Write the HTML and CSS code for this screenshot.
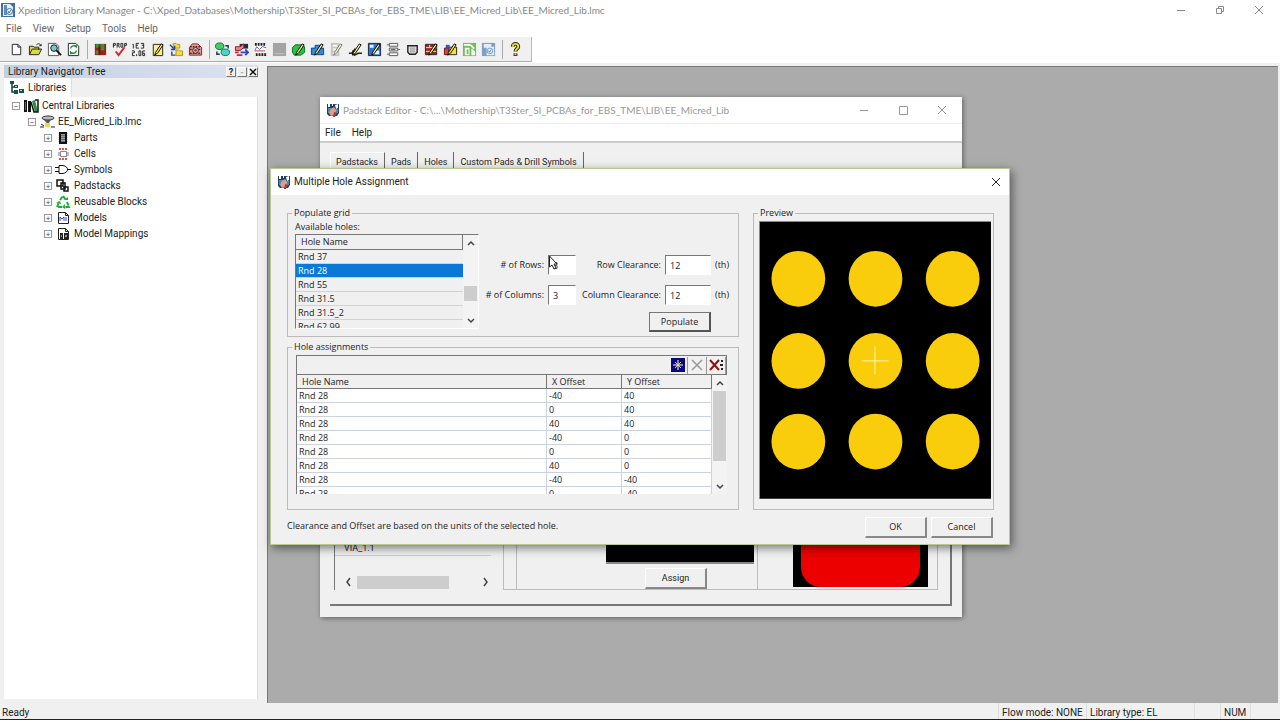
FILE: index.html
```html
<!DOCTYPE html>
<html lang="en">
<head>
<meta charset="utf-8">
<title>Xpedition Library Manager</title>
<link rel="stylesheet" href="styles.css">
</head>
<body>
<svg class="defs" aria-hidden="true">
  <symbol id="padicon" viewBox="0 0 14 14"><path fill="#24405f" d="M1 1h12v9l-2 3H3L1 11z"/><path fill="#fff" d="M2 1h2v3H2zM6 1h1v2H6zM9 2l3-1v4l-2 1z"/><path fill="#4d86c0" d="M2 5h4v5H2zM9 6h3v4H9z"/><path fill="#d9a08a" d="M5 6l3-2 2 3-1 5-4 1-2-3z"/><path fill="#a73b3b" d="M8 9l3 1-2 4H7z"/></symbol>
  <symbol id="pencil" viewBox="0 0 16 16"><path fill="#fff27a" stroke="#000" d="M6 11L12 2l2 1-6 9-3 2z"/></symbol>
  <symbol id="up" viewBox="0 0 8 8"><path fill="none" stroke="#444" stroke-width="1.500" d="M1 6l3-3 3 3"/></symbol>
  <symbol id="down" viewBox="0 0 8 8"><path fill="none" stroke="#444" stroke-width="1.500" d="M1 2l3 3 3-3"/></symbol>
  <symbol id="close" viewBox="0 0 10 10"><path fill="none" stroke="currentColor" d="M1 1l8 8M9 1l-8 8"/></symbol>
</svg>
<div class="app">
  <header class="titlebar">
    <svg class="i14" viewBox="0 0 14 14"><path fill="#3f6fa5" d="M0 0h14v14H0z"/><path fill="#e8f1fa" d="M2 1h7l3 3v9H2z"/><path fill="#5f8dc0" d="M3 2h3v10H3z"/><circle cx="8.500" cy="8.500" r="3" fill="#fff" stroke="#3b6ba6"/><path stroke="#3b6ba6" fill="none" d="M7 8l1 2 2-3"/></svg>
    <h1>Xpedition Library Manager - C:\Xped_Databases\Mothership\T3Ster_SI_PCBAs_for_EBS_TME\LIB\EE_Micred_Lib\EE_Micred_Lib.lmc</h1>
    <div class="winbtns main-btns">
      <button aria-label="Minimize"><svg class="i10" viewBox="0 0 10 10"><path stroke="currentColor" d="M1 5.500h8"/></svg></button>
      <button aria-label="Restore"><svg class="i10" viewBox="0 0 10 10"><path fill="none" stroke="currentColor" d="M1.500 3.500h5v5h-5zM3.500 3V1.500h5v5H7"/></svg></button>
      <button aria-label="Close"><svg class="i10"><use href="#close"/></svg></button>
    </div>
  </header>
  <nav class="menubar"><button>File</button><button>View</button><button>Setup</button><button>Tools</button><button>Help</button></nav>
  <div class="toolrow"><div class="toolbar" role="toolbar">
    <button aria-label="New"><svg viewBox="0 0 16 16"><path fill="#fff" stroke="#222" d="M3.500 2.500h6l3 3v8h-9zM9.500 2.500v3h3"/></svg></button>
    <button aria-label="Open"><svg viewBox="0 0 16 16"><path fill="#d8d84a" stroke="#222" d="M1.500 13.500v-9h4l1 1h5v3M1.500 13.500l3-6h10l-3 6z"/><path fill="none" stroke="#222" d="M9 3c2-2 4-1 5 1m0-2v2h-2"/></svg></button>
    <button aria-label="Find"><svg viewBox="0 0 16 16"><path fill="#fff" stroke="#555" d="M1.500 1.500h8l3 3v10h-11z"/><circle cx="7.500" cy="6.500" r="3.500" fill="#7fc6c9" stroke="#111"/><path stroke="#111" stroke-width="2" d="M10 9l5 5"/></svg></button>
    <button aria-label="Refresh"><svg viewBox="0 0 16 16"><path fill="#fff" stroke="#222" d="M2.500 1.500h8l3 3v10h-11z"/><path fill="none" stroke="#13903a" stroke-width="1.500" d="M5 7c0-3 4-4 6-2V3m0 6c0 3-4 4-6 2v2"/></svg></button>
    <span class="sep"></span>
    <button aria-label="Partition"><svg viewBox="0 0 16 16"><path fill="#a51d16" d="M2 2h12v12H2z"/><path fill="#2c9a35" d="M3 2h3v4H3zM8 2h4v7H8zM3 9h3v4H3z"/><path fill="#6e1410" d="M6 5h2v9H6z"/></svg></button>
    <button aria-label="Properties"><svg viewBox="0 0 16 16"><path fill="none" stroke="#222" d="M1.500 6V1.500h2v2h-2M5.500 6V1.500h2v2h-2M7 4l1 2M9.500 1.500h2v4h-2zM13.500 6V1.500h2v2h-2"/><path fill="none" stroke="#e0262d" stroke-width="2" d="M4 10l3 4 6-8"/></svg></button>
    <button aria-label="Units"><svg viewBox="0 0 16 16"><path fill="none" stroke="#222" d="M1.500 2.500h1v4.500M8.500 1.500h-3v5h3m-3-3h2M10.500 1.500h3v5h-3m1-3h2M1 9.500h2.500v2h-2v3H4M6 13v2M8.500 9.500h2v5h-2zM15 9.500h-2.500v5h2v-2.500h-2"/></svg></button>
    <button aria-label="Edit"><svg viewBox="0 0 16 16"><path fill="#f4f08d" stroke="#222" d="M3.500 2.500h10v12h-10z"/><use href="#pencil"/></svg></button>
    <button aria-label="Folders"><svg viewBox="0 0 16 16"><path fill="#f6dc37" stroke="#b8901c" d="M4.500 1.500h3l1 1h3v4h-7zM7.500 8.500h3l1 1h3v5h-7z"/><path stroke="#27459d" stroke-width="1.500" fill="none" d="M1 3l4 4m-3 1h4V4M3 10v4h4"/></svg></button>
    <button aria-label="Repair"><svg viewBox="0 0 16 16"><path fill="#d8a49c" stroke="#8c2018" d="M1.500 6l3-4h6l4 4v8h-13z"/><path fill="none" stroke="#7a1c14" stroke-width="1.500" stroke-dasharray="2 1" d="M2 5h12M2 8h12M2 12h12"/><circle cx="8" cy="9" r="3" fill="#ddd" stroke="#222"/><circle cx="8" cy="9" r="1.500" fill="#c22"/></svg></button>
    <span class="sep"></span>
    <button aria-label="Transfer"><svg viewBox="0 0 16 16"><ellipse cx="5" cy="4.500" rx="4.500" ry="3.500" fill="#3ed166" stroke="#176a35"/><ellipse cx="11" cy="11" rx="4.500" ry="3.500" fill="#45d9cb" stroke="#176a6a"/><path stroke="#136" fill="none" stroke-width="1.500" d="M11 4h3v3M5 13H2v-3"/></svg></button>
    <button aria-label="Part editor"><svg viewBox="0 0 16 16"><path fill="#222a44" d="M6 2h9v5H6z"/><path fill="#e78a80" stroke="#8c1c28" d="M1.500 5h5l4-3v4l-4 3h-5z"/><path fill="none" stroke="#2e47c4" stroke-width="2" d="M7 11h8m-3-3l3 3-3 3"/><path stroke="#d3263b" stroke-width="2" d="M1 11h4M3 14h6"/></svg></button>
    <button aria-label="Signal"><svg viewBox="0 0 16 16"><path fill="#fff" d="M2 2h12v10H2z"/><path fill="none" stroke="#222" stroke-dasharray="2 1" stroke-width="3" d="M2 2.500h12M3 13.500h12"/><path fill="none" stroke="#5a58b9" d="M2 9l2-4 3 3 3-3 4 1"/><path stroke="#c33" d="M2 9.500h11"/></svg></button>
    <button aria-label="Disabled view"><svg viewBox="0 0 16 16"><path fill="#a4a4a4" d="M1 1h14v14H1z"/><path stroke="#c6c6c6" d="M3 12.500h10"/></svg></button>
    <button aria-label="Edit layout"><svg viewBox="0 0 16 16"><path fill="#27c445" stroke="#0a6c21" d="M1.500 6l3-3h7l3 2v6l-4 3h-7l-2-3z"/><use href="#pencil"/></svg></button>
    <button aria-label="Edit block"><svg viewBox="0 0 16 16"><path fill="#2d8ce0" stroke="#123f91" d="M1.500 6.500h4v-3h6v3h3v7h-13z"/><use href="#pencil"/></svg></button>
    <button aria-label="Edit column"><svg viewBox="0 0 16 16" opacity=".5"><path fill="#999" d="M2 1h9v14H2z"/><path stroke="#fff" stroke-width="2" d="M4 4h5M4 8h5M4 12h5"/><use href="#pencil"/></svg></button>
    <button aria-label="Edit symbol"><svg viewBox="0 0 16 16"><path fill="none" stroke="#222" stroke-width="1.500" d="M1 12h3l3-4v6l4-2h4M5 9v5"/><use href="#pencil"/></svg></button>
    <button aria-label="Edit padstack"><svg viewBox="0 0 16 16"><path fill="#2678d0" stroke="#17213e" d="M1.500 1.500h13v13h-13z"/><path fill="#eee" d="M3 3h4v3H3zM8 9h5v4H8z"/><use href="#pencil"/></svg></button>
    <button aria-label="Cells"><svg viewBox="0 0 16 16"><path fill="#fff" stroke="#555" d="M3.500 1.500h9v3h-9zM3.500 6.500h9v3h-9zM3.500 11.500h9v3h-9z"/><path stroke="#555" d="M1 3h2M13 8h2M1 13h2M5 8h5"/></svg></button>
    <button aria-label="Shield"><svg viewBox="0 0 16 16"><path fill="#e8e8e8" stroke="#222" stroke-width="1.500" d="M3 4h10v7l-2 2H5l-2-2z"/><path stroke="#888" d="M5 6.500h6M5 8.500h6M5 10.500h6"/></svg></button>
    <button aria-label="Edit bricks"><svg viewBox="0 0 16 16"><path fill="#9f2921" stroke="#222" d="M1.500 2.500h12v11h-12z"/><path stroke="#eee" d="M2 6h11M2 10h11M6 3v3M9 6v4"/><use href="#pencil"/></svg></button>
    <button aria-label="Edit package"><svg viewBox="0 0 16 16"><path fill="#e23b32" stroke="#611" d="M1.500 6.500h5v7h-5z"/><path fill="#f5df32" stroke="#222" d="M6.500 5.500h8v8h-8z"/><path fill="#2c57b8" d="M3 3h4v4H3z"/><use href="#pencil"/></svg></button>
    <button aria-label="Export"><svg viewBox="0 0 16 16"><path fill="#6cbf55" d="M1 1h14v14H1z"/><path fill="#fff" d="M2 2h7v2H2zM3 6h5v8H3zM10 7l4 3v4h-4z"/><path fill="#6cbf55" d="M5 8h2v5H5z"/><path stroke="#fff" stroke-width="2" d="M9 3l4 4"/></svg></button>
    <button aria-label="Library"><svg viewBox="0 0 16 16"><path fill="#7b9fca" d="M1 1h14v14H1z"/><path fill="#e5eef8" d="M3 2h8v3h3v9H6V6H3z"/><circle cx="9.500" cy="9.500" r="3" fill="#fff" stroke="#6b94c4"/><path fill="none" stroke="#4c7cb5" d="M8 9l1 2 2-3"/></svg></button>
    <span class="sep"></span>
    <button aria-label="Help"><svg viewBox="0 0 16 16"><path fill="none" stroke="#222" stroke-width="4" d="M5 5c0-4 6-4 6 0 0 2-3 2-3 5m0 2v3"/><path fill="none" stroke="#e9dc2e" stroke-width="2" d="M5 5c0-4 6-4 6 0 0 2-3 2-3 5m0 2v2"/></svg></button>
  </div></div>
  <main class="workspace">
    <aside class="navigator">
      <div class="caption"><h2>Library Navigator Tree</h2><button aria-label="Help">?</button><button aria-label="Menu" class="dim">-</button><button aria-label="Close"><svg class="i8" viewBox="0 0 8 8"><path stroke="#111" stroke-width="1.500" d="M1 1l6 6M7 1L1 7"/></svg></button></div>
      <div class="navtabs"><button class="navtab"><svg class="i14" viewBox="0 0 14 14"><path fill="none" stroke="#123f37" stroke-width="1.500" d="M2 1v10h3M2 6h3"/><path fill="#155548" d="M0 0h4v3H0zM4 4h4v3H4zM4 9h4v4H4zM9 8h5v4H9z"/><path fill="#9dd" d="M5 5h2v1H5zM10 9h2v1h-2z"/></svg>Libraries</button></div>
      <ul class="tree">
        <li class="l0"><i class="box">−</i><svg viewBox="0 0 16 14"><path fill="#111" d="M1 1h3v12H1zM5 2h3v11H5z"/><path fill="#2e8b46" d="M2 3h1v8H2zM9 2l3-1 3 12h-3z"/><path fill="none" stroke="#111" stroke-width="1.500" d="M8 3l3 10h4V1h-3"/></svg>Central Libraries</li>
        <li class="l1"><i class="box">−</i><svg viewBox="0 0 16 14"><ellipse cx="9" cy="3" rx="6" ry="2" fill="#bbb" stroke="#333"/><path fill="#555" d="M5 5h7L9 9z"/><path fill="#ecdf31" d="M6 8h5v4H6z"/><path stroke="#222" d="M1 12h4m7 0h4M2 9l3 2"/></svg>EE_Micred_Lib.lmc</li>
        <li class="l2"><i class="box">+</i><svg viewBox="0 0 16 14"><path fill="#999" stroke="#111" stroke-width="2" d="M5 2h6v10H5z"/><path stroke="#111" stroke-dasharray="1 1" stroke-width="9" d="M8 2v10" opacity=".3"/></svg>Parts</li>
        <li class="l2"><i class="box">+</i><svg viewBox="0 0 16 14"><path fill="#fff" stroke="#888" d="M5.500 4.500h6v5h-6z"/><path stroke="#e05050" stroke-width="2" stroke-dasharray="2 1" d="M4 2h8M4 12h8"/><path stroke="#777" d="M3 6h2M3 8h2M12 6h2M12 8h2"/></svg>Cells</li>
        <li class="l2"><i class="box">+</i><svg viewBox="0 0 16 14"><path fill="#fff" stroke="#111" d="M4 2.500h4c6 1 6 7 0 8H4zM0 4.500h4M0 8.500h4M12 6.500h4"/></svg>Symbols</li>
        <li class="l2"><i class="box">+</i><svg viewBox="0 0 16 14"><path fill="#fff" stroke="#111" stroke-width="1.500" d="M2 1h6v6H2zM6 4h4v6H6zM9 8h4v4H9z"/></svg>Padstacks</li>
        <li class="l2"><i class="box">+</i><svg viewBox="0 0 16 14"><path fill="none" stroke="#1cae36" stroke-width="2" stroke-dasharray="4 1" d="M5 5l3-4 3 4M12 7l2 5H9M7 12H2l2-5"/><path fill="#1cae36" d="M9 5h4V2zM10 9v5l-3-2zM1 8l4-2 1 3z"/></svg>Reusable Blocks</li>
        <li class="l2"><i class="box">+</i><svg viewBox="0 0 16 14"><path fill="#fff" stroke="#222" d="M3.500 1.500h7l3 3v8h-10zM10.500 1.500v3h3"/><path fill="none" stroke="#3f46d0" d="M5 10V6l2 2 2-2v4m2-4v4"/></svg>Models</li>
        <li class="l2"><i class="box">+</i><svg viewBox="0 0 16 14"><path fill="#fff" stroke="#222" d="M3.500 1.500h7l3 3v8h-10zM10.500 1.500v3h3"/><path fill="#222" d="M5 6h3v7H5zM9 6h4v7H9z"/><path stroke="#fff" d="M6 9h1m3 0h2"/></svg>Model Mappings</li>
      </ul>
    </aside>
    <div class="desktop"></div>
  </main>
  <footer class="status"><span class="grow">Ready</span><span class="s1">Flow mode: NONE</span><span class="s2">Library type: EL</span><span class="s3"></span><span class="s4">NUM</span><span class="s4"></span></footer>

  <section class="window editor">
    <header class="wtitle pale"><svg class="i14"><use href="#padicon"/></svg><h2>Padstack Editor - C:\...\Mothership\T3Ster_SI_PCBAs_for_EBS_TME\LIB\EE_Micred_Lib</h2>
      <div class="winbtns"><button aria-label="Minimize"><svg class="i10" viewBox="0 0 10 10"><path stroke="currentColor" d="M1 5.500h8"/></svg></button><button aria-label="Maximize"><svg class="i10" viewBox="0 0 10 10"><path fill="none" stroke="currentColor" d="M1.500 1.500h8v8h-8z"/></svg></button><button aria-label="Close"><svg class="i10"><use href="#close"/></svg></button></div></header>
    <nav class="wmenu"><button>File</button><button>Help</button></nav>
    <div class="editor-body">
      <div class="tabs"><button class="active">Padstacks</button><button>Pads</button><button>Holes</button><button>Custom Pads &amp; Drill Symbols</button></div>
      <div class="panel">
        <div class="padlist"><div class="padname">VIA_1.1</div><div class="hscroll"><svg class="i10" viewBox="0 0 10 10"><path fill="none" stroke="#444" stroke-width="1.500" d="M6 1L3 5l3 4"/></svg><span class="hthumb"></span><svg class="i10" viewBox="0 0 10 10"><path fill="none" stroke="#444" stroke-width="1.500" d="M4 1l3 4-3 4"/></svg></div></div>
        <div class="padprops"><div class="gutter"></div><div class="assign"><div class="view"></div><button class="btn">Assign</button></div><div class="padview"><div class="redpad"></div></div></div>
      </div>
    </div>
  </section>

  <section class="window dialog" role="dialog" aria-labelledby="dlg">
    <header class="wtitle"><svg class="i14"><use href="#padicon"/></svg><h2 id="dlg">Multiple Hole Assignment</h2><div class="winbtns"><button aria-label="Close"><svg class="i10"><use href="#close"/></svg></button></div></header>
    <div class="dialog-body">
      <div class="groups">
        <div class="left">
          <fieldset class="populate"><legend>Populate grid</legend>
            <div class="available"><div class="avlabel">Available holes:</div>
              <div class="listbox"><table class="holes"><thead><tr><th>Hole Name</th></tr></thead><tbody><tr><td>Rnd 37</td></tr><tr class="selected"><td>Rnd 28</td></tr><tr><td>Rnd 55</td></tr><tr><td>Rnd 31.5</td></tr><tr><td>Rnd 31.5_2</td></tr><tr><td>Rnd 62.99</td></tr></tbody></table>
                <div class="vscroll"><svg class="i8"><use href="#up"/></svg><span class="thumb low"></span><svg class="i8"><use href="#down"/></svg></div></div>
            </div>
            <form class="gridform">
              <label for="rows"># of Rows:</label><input id="rows" value="3"><label for="rc">Row Clearance:</label><input id="rc" value="12"><span>(th)</span>
              <label for="cols"># of Columns:</label><input id="cols" value="3"><label for="cc">Column Clearance:</label><input id="cc" value="12"><span>(th)</span>
              <button type="button" class="btn default">Populate</button>
            </form>
          </fieldset>
          <fieldset class="assignments"><legend>Hole assignments</legend>
            <div class="atools"><button aria-label="Add row" class="add"><svg viewBox="0 0 14 14"><path fill="#09097b" d="M0 0h14v14H0z"/><path stroke="#fff" d="M7 2v10M2 7h10"/><path stroke="#f3e56a" d="M4 4l6 6M10 4l-6 6"/></svg></button><button aria-label="Delete row"><svg viewBox="0 0 14 14"><path stroke="#999" stroke-width="1.500" d="M2 2l10 10M12 2L2 12"/></svg></button><button aria-label="Delete all rows"><svg viewBox="0 0 14 14"><path stroke="#8f1111" stroke-width="2" d="M1 2l9 10M10 2L1 12"/><path fill="#222" d="M12 2h2v2h-2zM11 6h3v2h-3zM12 10h2v2h-2z"/></svg></button></div>
            <div class="atable"><table><thead><tr><th>Hole Name</th><th class="cx">X Offset</th><th class="cy">Y Offset</th></tr></thead><tbody>
              <tr><td>Rnd 28</td><td>-40</td><td>40</td></tr><tr><td>Rnd 28</td><td>0</td><td>40</td></tr><tr><td>Rnd 28</td><td>40</td><td>40</td></tr><tr><td>Rnd 28</td><td>-40</td><td>0</td></tr><tr><td>Rnd 28</td><td>0</td><td>0</td></tr><tr><td>Rnd 28</td><td>40</td><td>0</td></tr><tr><td>Rnd 28</td><td>-40</td><td>-40</td></tr><tr><td>Rnd 28</td><td>0</td><td>-40</td></tr></tbody></table>
              <div class="vscroll"><svg class="i8"><use href="#up"/></svg><span class="thumb tall"></span><svg class="i8"><use href="#down"/></svg></div></div>
          </fieldset>
        </div>
        <fieldset class="preview"><legend>Preview</legend>
          <svg viewBox="0 0 232 278"><path d="M0 0h232v278H0z"/><g fill="#f9cc0c"><ellipse cx="38.500" cy="57" rx="27" ry="28"/><ellipse cx="116" cy="57" rx="27" ry="28"/><ellipse cx="193.500" cy="57" rx="27" ry="28"/><ellipse cx="38.500" cy="139.500" rx="27" ry="28"/><ellipse cx="116" cy="139.500" rx="27" ry="28"/><ellipse cx="193.500" cy="139.500" rx="27" ry="28"/><ellipse cx="38.500" cy="220.500" rx="27" ry="28"/><ellipse cx="116" cy="220.500" rx="27" ry="28"/><ellipse cx="193.500" cy="220.500" rx="27" ry="28"/></g><path stroke="#fff7b0" d="M102 139.500h27M115.500 125v28"/></svg>
        </fieldset>
      </div>
      <div class="foot"><p>Clearance and Offset are based on the units of the selected hole.</p><button class="btn">OK</button><button class="btn">Cancel</button></div>
    </div>
  </section>
  <svg class="cursor" viewBox="0 0 10 16"><path fill="#fff" stroke="#222" d="M.500 1v11l2.500-2 2 4 2-1-2-4h3z"/></svg>
</div>
</body>
</html>
```
FILE: styles.css
```css
* { box-sizing: border-box; }
body { margin: 0; background: #f0f0f0; color: #222; font: 10px/14px Roboto, "Open Sans", sans-serif; }
h1, h2, p, ul { margin: 0; padding: 0; font-size: inherit; font-weight: 400; }
button { border: 0; padding: 0; background: none; color: inherit; font: inherit; }
svg { display: block; flex: none; }
table { border-collapse: separate; border-spacing: 0; table-layout: fixed; }
.defs { position: absolute; width: 0; height: 0; }
.i14 { width: 14px; height: 14px; }
.i10 { width: 10px; height: 10px; }
.i8 { width: 8px; height: 8px; }

.app { position: relative; display: flex; flex-direction: column; height: 100vh; overflow: hidden; border-bottom: 1px solid #222; }
.titlebar { display: flex; align-items: center; gap: 3px; height: 20px; padding-left: 1px; background: #fff; color: #888; }
.titlebar h1 { flex: 1; white-space: nowrap; }
.titlebar h1, .pale h2 { font-family: Lato, "Open Sans", sans-serif; }
.winbtns { display: flex; gap: 29px; margin-left: auto; }
.main-btns { padding-right: 16px; }
.menubar { display: flex; gap: 11px; height: 17px; padding-left: 6px; background: #fff; color: #666; }
.toolrow { height: 26px; background: #fff; }
.toolbar { display: flex; align-items: center; width: 532px; height: 25px; padding-left: 7px; background: #f0f0f0; border-right: 1px solid #bbb; border-bottom: 1px solid #aaa; }
.toolbar button { width: 19px; }
.toolbar svg { width: 15px; height: 15px; margin: auto; }
.sep { width: 8px; height: 19px; background: linear-gradient(#aaa, #aaa) center / 1px 100% no-repeat; }

.workspace { flex: 1; display: flex; min-height: 0; }
.navigator { display: flex; flex-direction: column; width: 258px; margin-right: 9px; padding: 2px 0 4px 4px; }
.caption { display: flex; align-items: center; gap: 1px; height: 13px; padding-left: 4px; background: linear-gradient(90deg, #c3d0e2, #dbe3ee); }
.caption h2 { flex: 1; }
.caption button { display: flex; align-items: center; justify-content: center; width: 10px; height: 10px; border: 1px solid; border-color: #fff #777 #777 #fff; background: #f0f0f0; font-size: 9px; line-height: 8px; font-weight: 700; }
.caption .dim { color: #aaa; }
.navtabs { display: flex; height: 19px; }
.navtab { display: flex; align-items: center; gap: 4px; padding: 0 5px 0 6px; background: #fff; border-right: 1px solid #ddd; }
.tree { flex: 1; padding-top: 1px; background: #fff; border-right: 1px solid #ddd; list-style: none; }
.tree li { display: flex; align-items: center; height: 16px; }
.tree svg { width: 16px; height: 14px; margin: 0 3px 0 3px; }
.l0 { padding-left: 8px; }
.l1 { padding-left: 24px; }
.l2 { padding-left: 40px; }
.box { width: 8px; height: 8px; border: 1px solid #999; color: #333; font: 8px/6px "Open Sans", sans-serif; text-align: center; }
.desktop { flex: 1; margin: 3px 2px 0 0; background: #ababab; border: 1px solid #777; border-width: 1px 0 0 1px; }
.status { display: flex; height: 16px; padding-left: 2px; line-height: 19px; white-space: nowrap; }
.status span { padding-left: 3px; border-left: 1px solid #ddd; }
.status .grow { flex: 1; padding: 0; border: 0; }
.s1 { width: 88px; }
.s2 { width: 108px; }
.s3 { width: 26px; }
.s4 { width: 30px; }

.window { position: absolute; display: flex; flex-direction: column; background: #f0f0f0; }
.editor { left: 320px; top: 97px; width: 642px; height: 520px; box-shadow: 1px 1px 5px rgba(0, 0, 0, .45); }
.dialog { left: 270px; top: 168px; width: 740px; height: 377px; border: 1px solid #b9c795; box-shadow: 2px 3px 9px rgba(0, 0, 0, .5); }
.wtitle { display: flex; align-items: center; gap: 3px; height: 26px; padding: 0 8px 0 6px; background: #fff; }
.pale { padding-right: 15px; color: #999; }
.wmenu { display: flex; gap: 11px; height: 20px; padding-left: 5px; background: #fff; border-bottom: 2px solid #ccc; line-height: 18px; border-top: 1px solid #eee; }
.editor-body { flex: 1; display: flex; flex-direction: column; padding: 9px 10px 11px; }
.tabs { display: flex; height: 18px; font-size: 9px; }
.tabs button { padding: 2px 6px 0; border-right: 1px solid #666; }
.tabs .active { padding-top: 0; padding-left: 5px; border-top: 1px solid #fff; border-left: 1px solid #fff; }
.panel { flex: 1; display: flex; gap: 8px; padding: 5px 12px 14px 4px; border: solid #777; border-width: 0 2px 2px 0; }
.padlist { width: 161px; display: flex; flex-direction: column; justify-content: flex-end; gap: 18px; border-left: 1px solid #777; }
.padname { padding-left: 9px; line-height: 11px; border-bottom: 1px solid #ccd; margin-right: 4px; height: 13px; font-size: 9px; }
.hscroll { display: flex; align-items: center; height: 16px; padding: 0 5px 0 9px; }
.hthumb { width: 92px; height: 13px; margin: 0 auto 0 3px; background: #cdcdcd; }
.padprops { flex: 1; display: flex; border: 1px solid #bbb; }
.gutter { width: 13px; border-right: 1px solid #bbb; }
.assign { width: 241px; display: flex; flex-direction: column; align-items: flex-end; gap: 4px; padding: 0 3px 0 0; border-right: 1px solid #bbb; }
.view { flex: 1; width: 148px; background: #000; border-bottom: 2px solid #888; }
.assign .btn { margin-right: 47px; font-size: 9px; }
.padview { width: 135px; margin: 0 0 2px 35px; padding: 0 8px; background: #000; }
.redpad { height: 100%; background: #ec0000; border-radius: 20px; }

.btn { width: 62px; height: 21px; border: solid; border-width: 1px 2px 2px 1px; border-color: #fff #888 #888 #fff; background: #f0f0f0; line-height: 16px; }
.btn.default { border-color: #777 #555 #555 #777; }
.dialog-body { flex: 1; padding: 12px 16px 0 16px; font: 9px/12px "Open Sans", "Noto Sans", sans-serif; }
.groups { display: flex; justify-content: space-between; gap: 14px; margin-right: -1px; }
.left { flex: 1; display: flex; flex-direction: column; gap: 4px; }
fieldset { min-width: 0; margin: 0; padding: 0; border: 1px solid #bbb; }
legend { margin-left: 4px; padding: 0 2px; line-height: 12px; }
.populate { height: 130px; display: flex; padding: 2px 5px 8px 0; }
.available { width: 184px; margin-left: 7px; }
.listbox { display: flex; height: 95px; overflow: hidden; margin-top: 1px; border: 1px solid; border-color: #777 #fff #fff #777; }
.listbox table { flex: 1; }
th { height: 15px; padding: 0 0 0 5px; border-right: 1px solid #777; border-bottom: 1px solid #777; background: #f0f0f0; font-weight: 400; text-align: left; line-height: 14px; }
td { height: 14px; padding: 0 2px; border-bottom: 1px solid #ccd3de; line-height: 13px; }
.holes { height: 99px; }
.selected td { background: #0a78d7; color: #fff; }
.vscroll { width: 15px; display: flex; flex-direction: column; align-items: center; justify-content: space-between; padding: 4px 0 3px; background: #f3f3f3; }
.thumb { width: 13px; background: #cdcdcd; }
.low { height: 15px; margin-top: 22px; }
.tall { height: 70px; margin-bottom: 18px; }
.gridform { flex: 1; display: grid; grid-template-columns: 65px 28px 1fr 46px 18px; grid-template-rows: 30px 30px 24px; column-gap: 4px; align-content: start; align-items: center; padding: 29px 0 0; }
.gridform label { text-align: right; white-space: nowrap; }
.gridform input { width: 100%; height: 20px; padding: 0 0 0 4px; border: 1px solid; border-color: #777 #fff #fff #777; background: #fff; color: #222; font: inherit; }
.gridform .btn { grid-column: 3 / 5; justify-self: end; height: 20px; }
.assignments { height: 169px; padding: 2px 11px 0 0; }
.atools { display: flex; justify-content: flex-end; align-items: center; height: 19px; margin-left: 8px; border: 1px solid #777; border-bottom: 0; }
.atools button { width: 19px; height: 17px; border-right: 1px solid #999; }
.atools svg { width: 14px; height: 14px; margin: auto; }
.atable { display: flex; height: 120px; margin-left: 8px; overflow: hidden; border-left: 1px solid #777; border-top: 1px solid #777; background: #fff; }
.atable table { flex: 1; height: 126px; }
.atable th { height: 14px; line-height: 13px; }
.cx { width: 75px; }
.cy { width: 90px; }
.atable td { border-right: 1px solid #ccd3de; }
.preview { width: 241px; height: 303px; padding: 2px 2px 0 0; }
.preview svg { width: auto; height: auto; margin-left: 5px; border: solid #888; border-width: 1px 0 0 1px; }
.foot { display: flex; gap: 4px; padding-top: 7px; }
.foot p { flex: 1; padding-top: 3px; }
.cursor { position: absolute; left: 549px; top: 255px; width: 10px; height: 16px; }
```
